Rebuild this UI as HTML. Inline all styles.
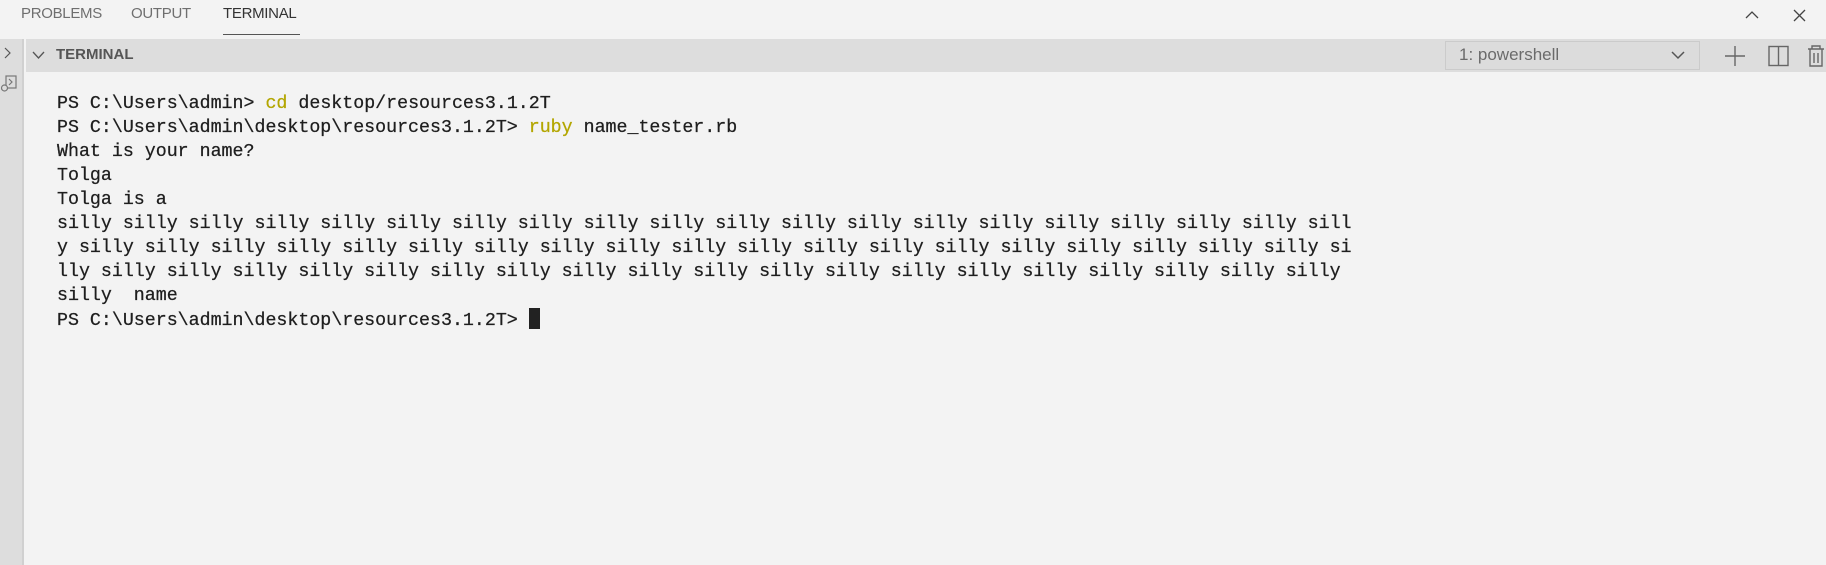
<!DOCTYPE html>
<html><head><meta charset="utf-8"><style>
*{margin:0;padding:0;box-sizing:border-box}
body{width:1826px;height:565px;background:#f3f3f3;position:relative;overflow:hidden;font-family:"Liberation Sans",sans-serif}
.tab{position:absolute;top:5px;font-size:15px;color:#6f6f6f;letter-spacing:-0.3px}
.band{position:absolute;left:26px;top:39px;width:1800px;height:33px;background:#dddddd}
.side{position:absolute;left:0;top:39px;width:24px;height:526px;background:#dddddd;border-right:2px solid #d0d0d0}
.term{position:absolute;left:57px;top:92px;font-family:"Liberation Mono",monospace;font-size:18.3px;line-height:24px;color:#1e1e1e;white-space:pre;-webkit-text-stroke:0.25px #1e1e1e}
.y{color:#b3a600;-webkit-text-stroke:0.25px #b3a600}
.cur{display:inline-block;width:11px;height:21px;background:#222;vertical-align:-4px}
</style></head><body>
<div class="tab" style="left:21px">PROBLEMS</div>
<div class="tab" style="left:131px">OUTPUT</div>
<div class="tab" style="left:223px;color:#333">TERMINAL</div>
<div style="position:absolute;left:223px;top:34px;width:77px;height:1px;background:#555"></div>
<svg style="position:absolute;left:1740px;top:6px" width="80" height="18"><path d="M6 12 L12 6 L18 12" fill="none" stroke="#444" stroke-width="1.3"/><path d="M54 4 L65 15 M65 4 L54 15" stroke="#444" stroke-width="1.3"/></svg>
<div class="side"></div>
<svg style="position:absolute;left:0;top:44px" width="24" height="60"><path d="M5 4 L10 9 L5 14" fill="none" stroke="#555" stroke-width="1.2"/><rect x="6" y="32" width="10" height="12" fill="none" stroke="#777" stroke-width="1.2"/><path d="M9 35 l3 3 -3 3" fill="none" stroke="#777" stroke-width="1.2"/><circle cx="4.5" cy="44" r="3" fill="#dddddd" stroke="#777" stroke-width="1.2"/></svg>
<div class="band"></div>
<svg style="position:absolute;left:32px;top:50px" width="14" height="10"><path d="M1 2 L6.5 8 L12 2" fill="none" stroke="#555" stroke-width="1.3"/></svg>
<div style="position:absolute;left:56px;top:46px;font-size:15px;font-weight:bold;color:#555">TERMINAL</div>
<div style="position:absolute;left:1445px;top:41px;width:255px;height:29px;background:#dcdcdc;border:1px solid #cbcbcb;font-size:17px;color:#6b6b6b;padding:3px 0 0 13px">1: powershell</div>
<svg style="position:absolute;left:1670px;top:50px" width="16" height="10"><path d="M2 2 L8 8 L14 2" fill="none" stroke="#555" stroke-width="1.5"/></svg>
<svg style="position:absolute;left:1720px;top:44px" width="106" height="24"><path d="M15 2 V22 M5 12 H25" stroke="#666" stroke-width="1.4"/><rect x="49" y="2.5" width="19" height="19" fill="none" stroke="#666" stroke-width="1.4"/><path d="M58.5 2.5 V21.5" stroke="#666" stroke-width="1.4"/><path d="M88 5 H104 M92 5 V2 H100 V5 M90 5 V22 H102 V5 M94 9 V19 M98 9 V19" fill="none" stroke="#666" stroke-width="1.4"/></svg>
<div class="term">PS C:\Users\admin&gt; <span class="y">cd</span> desktop/resources3.1.2T
PS C:\Users\admin\desktop\resources3.1.2T&gt; <span class="y">ruby</span> name_tester.rb
What is your name?
Tolga
Tolga is a
silly silly silly silly silly silly silly silly silly silly silly silly silly silly silly silly silly silly silly sill
y silly silly silly silly silly silly silly silly silly silly silly silly silly silly silly silly silly silly silly si
lly silly silly silly silly silly silly silly silly silly silly silly silly silly silly silly silly silly silly silly
silly  name
PS C:\Users\admin\desktop\resources3.1.2T&gt; <span class="cur"></span></div>
</body></html>
